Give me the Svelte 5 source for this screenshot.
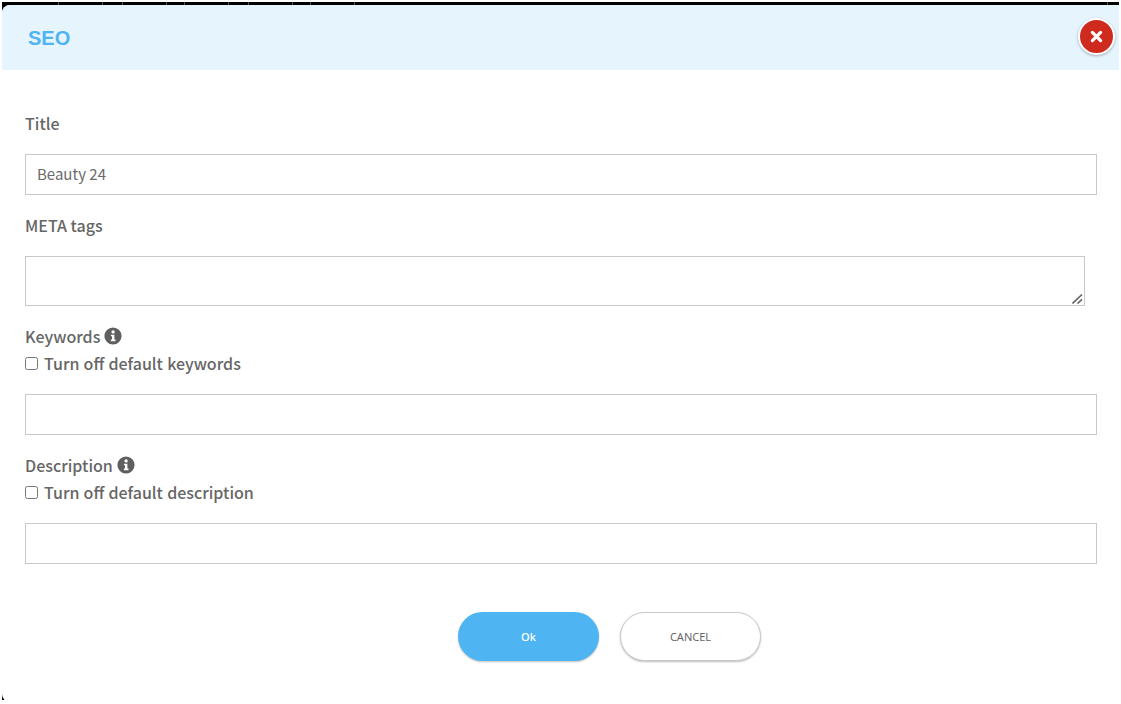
<script>
  const fields = [
    { label: 'Keywords', check: 'Turn off default keywords' },
    { label: 'Description', check: 'Turn off default description' }
  ];
</script>

<div class="frame">
  <section class="modal">
    <header class="head">
      <h1>SEO</h1>
      <button class="close" aria-label="Close">
        <svg viewBox="0 0 12 12" width="13" height="13">
          <path d="M2.2 2.2l7.6 7.6M9.8 2.2l-7.6 7.6" stroke="#fff" stroke-width="3" stroke-linecap="round" />
        </svg>
      </button>
    </header>

    <form class="body">
      <label class="lab" for="title">Title</label>
      <input id="title" class="text" value="Beauty 24" />

      <label class="lab meta" for="meta">META tags</label>
      <div class="area">
        <textarea id="meta"></textarea>
        <svg class="grip" viewBox="0 0 11 10" width="11" height="10">
          <path d="M0.5 9.5l9.5-9M5.5 9.5l4.5-4.2" stroke="#666" stroke-width="1.6" fill="none" />
        </svg>
      </div>

      {#each fields as f}
        <div class="lab info">
          {f.label}
          <svg viewBox="0 0 18 18" width="18" height="18">
            <circle cx="9" cy="9" r="8.6" fill="#5f5f5f" />
            <circle cx="9.1" cy="4.9" r="1.7" fill="#fff" />
            <path d="M6.9 7.7h3.5v4.9h1.1v1.6H6.9v-1.6H8v-3.3H6.9z" fill="#fff" />
          </svg>
        </div>
        <label class="lab check"><input type="checkbox" />{f.check}</label>
        <input class="text" />
      {/each}

      <div class="actions">
        <button type="button" class="btn ok">Ok</button>
        <button type="button" class="btn cancel">CANCEL</button>
      </div>
    </form>
  </section>
</div>

<style>
  :global(body) {
    background: #fff;
    font-family: "Noto Sans CJK JP", "Noto Sans", sans-serif;
  }

  .frame {
    height: 700px;
    margin: 0 2px;
    position: relative;
    top: 2px;
    padding-top: 3px;
    box-sizing: border-box;
    background:
      repeating-linear-gradient(90deg, #555 0 1px, #000 1px 44px, #555 44px 45px, #000 45px 64px, #555 64px 65px, #000 65px 108px, #555 108px 109px, #000 109px 126px) no-repeat 56px 0 / 297px 3px,
      linear-gradient(#555, #555) no-repeat 1105px 0 / 1px 3px,
      #000;
  }

  .modal {
    background: #fff;
    height: 697px;
    border-radius: 8px 0 0 8px;
    overflow: hidden;
  }

  .head {
    height: 65px;
    background: #e6f4fd;
    display: flex;
    align-items: center;
    justify-content: space-between;
    padding: 0 4px 0 26px;
    box-sizing: border-box;
  }

  h1 {
    margin: 1px 0 0;
    font: bold 20px "Liberation Sans", sans-serif;
    color: #4fb5f2;
  }

  .close {
    width: 37px;
    height: 37px;
    padding: 0;
    margin-top: -2px;
    border: 2px solid #fff;
    border-radius: 50%;
    background: #cf2a1e;
    box-shadow: 0 1px 3px rgba(0, 0, 0, 0.3);
    display: flex;
    align-items: center;
    justify-content: center;
  }

  .body {
    padding: 42px 22px 0 23px;
    display: flex;
    flex-direction: column;
    align-items: stretch;
  }

  .lab {
    font-size: 16px;
    font-weight: 500;
    line-height: 22px;
    color: #666;
  }

  .text {
    height: 41px;
    box-sizing: border-box;
    margin-top: 20px;
    padding: 0 11px 2px;
    border: 1px solid #c8c8c8;
    font: 400 15px "Noto Sans CJK JP", sans-serif;
    color: #6b6b6b;
    outline: none;
  }

  .meta {
    margin-top: 19px;
  }

  .area {
    position: relative;
    width: 1060px;
    margin-top: 20px;
  }

  textarea {
    height: 50px;
    width: 100%;
    box-sizing: border-box;
    border: 1px solid #c8c8c8;
    display: block;
    resize: none;
  }

  .grip {
    position: absolute;
    right: 2px;
    bottom: 2px;
  }

  .info {
    display: flex;
    align-items: center;
    gap: 4px;
    margin-top: 19px;
  }

  .check {
    display: flex;
    align-items: center;
    gap: 6px;
    margin-top: 5px;
    word-spacing: 0.6px;
  }

  .check input {
    margin: 0;
    width: 13px;
    height: 13px;
  }

  .actions {
    display: flex;
    justify-content: center;
    gap: 21px;
    margin-top: 48px;
    padding-left: 97px;
  }

  .btn {
    width: 141px;
    height: 49px;
    border-radius: 25px;
    font: 500 11px "Noto Sans", sans-serif;
    box-sizing: border-box;
    box-shadow: 0 1px 2px rgba(0, 0, 0, 0.25);
  }

  .ok {
    border: 0;
    background: #4fb5f2;
    color: #fff;
  }

  .cancel {
    border: 1px solid #c8c8c8;
    background: #fff;
    color: #666;
    font-weight: 400;
  }
</style>
